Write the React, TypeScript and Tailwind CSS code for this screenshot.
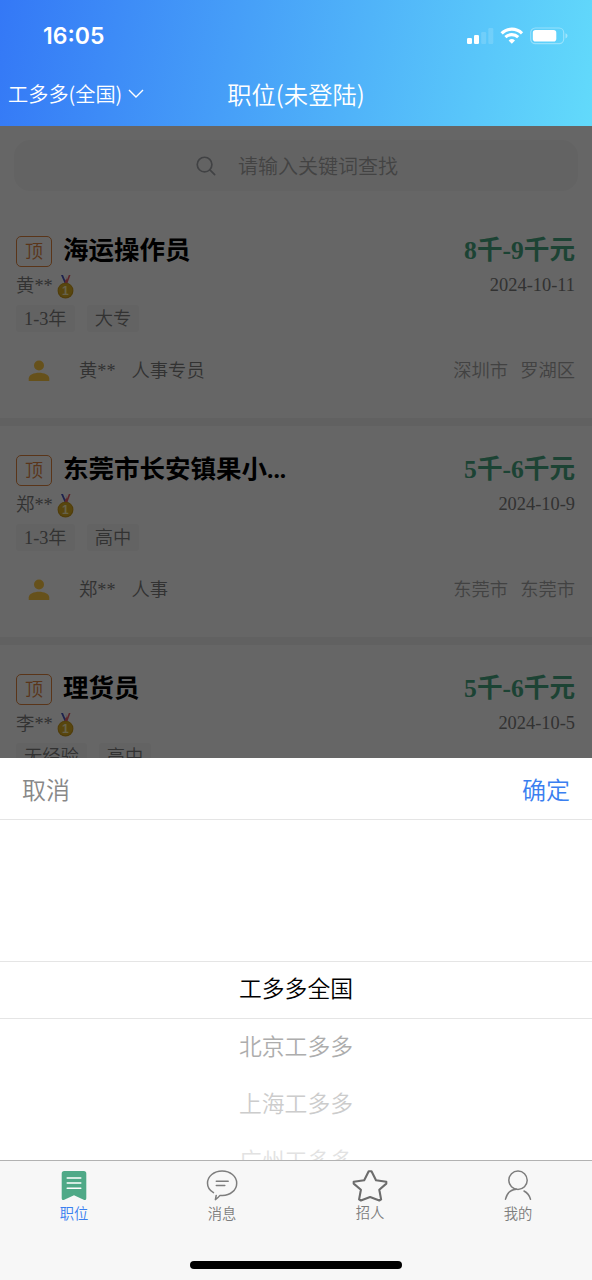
import { useState } from 'react'
import { cva } from 'class-variance-authority'

interface Job {
  id: number
  title: string
  salary: string
  owner: string
  date: string
  tags: string[]
  role: string
  city: string
  district: string
}

const JOBS: Job[] = [
  { id: 1, title: '海运操作员', salary: '8千-9千元', owner: '黄**', date: '2024-10-11', tags: ['1-3年', '大专'], role: '人事专员', city: '深圳市', district: '罗湖区' },
  { id: 2, title: '东莞市长安镇果小...', salary: '5千-6千元', owner: '郑**', date: '2024-10-9', tags: ['1-3年', '高中'], role: '人事', city: '东莞市', district: '东莞市' },
  { id: 3, title: '理货员', salary: '5千-6千元', owner: '李**', date: '2024-10-5', tags: ['无经验', '高中'], role: '', city: '', district: '' },
]

const REGIONS = ['工多多全国', '北京工多多', '上海工多多', '广州工多多']
const REGION_COLORS = ['text-black', 'text-[#adadad]', 'text-[#cccccc]', 'text-[#e2e2e2]']

const TABS = [
  { label: '职位', icon: BookmarkIcon },
  { label: '消息', icon: ChatIcon },
  { label: '招人', icon: StarIcon },
  { label: '我的', icon: UserIcon },
]

const tabLabel = cva('text-[14.3px] leading-[18px]', {
  variants: {
    active: { true: 'text-[#3a7ff0]', false: 'text-[#7d7d7d]' },
  },
})

function StatusIcons() {
  return (
    <svg width="102" height="18" viewBox="0 0 102 18" fill="white">
      <rect x="0" y="11" width="5" height="6" rx="1.3" />
      <rect x="7" y="8" width="5" height="9" rx="1.3" />
      <rect x="14.2" y="5" width="5" height="12" rx="1.3" opacity="0.15" />
      <rect x="21.3" y="1" width="5" height="16" rx="1.3" opacity="0.15" />
      <g fill="none" stroke="white" strokeWidth="3.1">
        <path d="M34.6 6.3a14.6 14.6 0 0 1 20.4 0" />
        <path d="M38.4 10.2a9.2 9.2 0 0 1 12.8 0" />
      </g>
      <path d="M41.6 13.5a4.8 4.8 0 0 1 6.4 0l-3.2 3.3z" />
      <rect x="63.7" y="1" width="33" height="15.6" rx="4.6" fill="none" stroke="white" strokeOpacity="0.35" strokeWidth="1.2" />
      <rect x="65.8" y="3" width="23.5" height="11.6" rx="2.8" />
      <path d="M98.5 6.2c1.4.5 2 1.4 2 2.6s-.6 2.1-2 2.6z" opacity="0.4" />
    </svg>
  )
}

function MedalIcon() {
  return (
    <svg width="18" height="24" viewBox="0 0 18 24">
      <path d="M4 0h3.500l3 8h-3z" fill="#4a55c0" />
      <path d="M6 0h2l1.300 4-.8 2z" fill="#fff" />
      <path d="M13.500 0h-3l-3 8h3z" fill="#e8606c" />
      <path d="M11.800 0h-1.600l-1 3 .7 2z" fill="#fff" />
      <circle cx="8.500" cy="15.700" r="7.900" fill="#c99a1c" />
      <circle cx="8.500" cy="15.300" r="6.900" fill="#dcae24" />
      <text x="8.300" y="19.700" textAnchor="middle" fontSize="12" fontWeight="700" fill="#fff3b8" fontFamily="Liberation Sans, sans-serif">1</text>
    </svg>
  )
}

function PersonIcon() {
  return (
    <svg width="22" height="22" viewBox="0 0 22 22" fill="#ffca45">
      <circle cx="11" cy="5.500" r="5" />
      <path d="M.700 21v-2.600C.700 14.800 6 12.700 11 12.700s10.300 2.100 10.300 5.700V21z" />
    </svg>
  )
}

function BookmarkIcon() {
  return (
    <svg width="36" height="32" viewBox="0 0 36 32">
      <path d="M8.200 1h19.600A2.500 2.500 0 0 1 30.300 3.500v24.500c0 1.900-1.200 2.500-2.600 1.700L18 25.200l-9.700 4.500C6.900 30.500 5.700 29.900 5.700 28V3.500A2.500 2.500 0 0 1 8.200 1z" fill="#4fa987" />
      <path d="M11.200 8h13.600M11.200 13.100h13.600M11.200 18.200h13.600" stroke="#fff" strokeWidth="1.500" strokeLinecap="round" />
    </svg>
  )
}

function ChatIcon() {
  return (
    <svg width="36" height="32" viewBox="0 0 36 32" fill="none" stroke="#7d7d7d" strokeWidth="1.500" strokeLinecap="round" strokeLinejoin="round">
      <path d="M9.500 22.600C5.800 20.500 3.500 17 3.500 13.200 3.500 6.300 10 1 18.100 1s14.600 5.300 14.600 12.200-6.500 12.300-14.300 12.300c-.8 0-1.600 0-2.400-.1-1.500 1.900-3 3.300-4.600 4.300l.8-4.300" />
      <path d="M12.300 11.300h11.900M12.300 15.400h8.500" />
    </svg>
  )
}

function StarIcon() {
  return (
    <svg width="36" height="32" viewBox="0 0 36 32" fill="none" stroke="#6c6c6c" strokeWidth="2.100" strokeLinejoin="round">
      <path d="M16.700 1.300h2.800l4.500 9 10.300 1.500v1.800l-7 6.200 1.800 9.600-1.800 1.100-9.200-3.500-9.200 3.500-1.800-1.100 1.800-9.600-7.200-6.200v-1.800l10.500-1.500z" />
    </svg>
  )
}

function UserIcon() {
  return (
    <svg width="36" height="32" viewBox="0 0 36 32" fill="none" stroke="#7d7d7d" strokeWidth="1.500" strokeLinecap="round">
      <circle cx="18" cy="10.200" r="9.200" />
      <path d="M5.500 29.200c1.200-5.300 4.800-9.500 11-9.900M24 21c3.500 1.900 5.500 4.500 6.500 8.200" />
    </svg>
  )
}

function JobCard({ job }: { job: Job }) {
  return (
    <div className="h-[219px] shrink-0 border-b-8 border-[#f3f3f3] bg-white px-4 pt-[27px]">
      <div className="flex h-8 items-center">
        <span className="mt-0.5 flex h-[31px] w-9 items-center justify-center rounded-[5px] border border-[#e0853f] pt-[3px] text-[18px] text-[#e0853f]">
          顶
        </span>
        <h3 className="ml-[11px] flex-1 pt-px text-[25.500px] leading-8 font-bold text-black">{job.title}</h3>
        <span className="mr-px pt-px text-[25.600px] leading-8 font-bold text-[#48a882]">{job.salary}</span>
      </div>
      <div className="mt-[7px] flex h-7 items-center justify-between text-[18.400px] text-[#7d7d7d]">
        <div className="flex items-center gap-1">
          <span>{job.owner}</span>
          <MedalIcon />
        </div>
        <span className="mr-px mb-0.5">{job.date}</span>
      </div>
      <div className="mt-1 flex gap-3">
        {job.tags.map((tag) => (
          <span key={tag} className="h-[27px] rounded-[3px] bg-[#f7f7f7] px-2 pt-px text-[18.300px] leading-[27px] text-[#7d7d7d]">
            {tag}
          </span>
        ))}
      </div>
      {job.role && (
        <div className="mt-[25px] flex h-7 items-center pl-3 text-[18.300px]">
          <PersonIcon />
          <span className="ml-[29px] pt-0.5 text-[#7d7d7d]">{job.owner}</span>
          <span className="ml-4 flex-1 pt-0.5 text-[#7d7d7d]">{job.role}</span>
          <div className="mr-px flex gap-3 pt-0.5 text-[#a5a5a5]">
            <span>{job.city}</span>
            <span>{job.district}</span>
          </div>
        </div>
      )}
    </div>
  )
}

export default function App() {
  const [activeTab, setActiveTab] = useState('职位')
  const [region, setRegion] = useState(REGIONS[0])

  return (
    <div className="flex h-[1280px] w-[592px] flex-col overflow-hidden bg-white font-['Noto_Sans_CJK_SC',sans-serif] font-[350]">
      <header className="h-[126px] shrink-0 bg-linear-[100deg,#3478f6_0%,#62dafb_100%] text-white">
        <div className="flex h-[62px] items-end justify-between pr-[23px] pb-3 pl-[43px]">
          <span className="font-['Inter',sans-serif] text-[23px] leading-7 font-semibold">16:05</span>
          <div className="pb-[5px]">
            <StatusIcons />
          </div>
        </div>
        <div className="grid h-16 grid-cols-3 items-center">
          <button className="flex items-center gap-1.5 pl-2 text-[20.200px] whitespace-nowrap">
            工多多(全国)
            <svg width="16" height="10" viewBox="0 0 16 10" fill="none" stroke="white" strokeWidth="1.400">
              <path d="M1 1l7 7 7-7" />
            </svg>
          </button>
          <h1 className="text-center text-[24.300px] whitespace-nowrap">职位(未登陆)</h1>
        </div>
      </header>

      <main className="relative flex h-[632px] shrink-0 flex-col overflow-hidden font-['Liberation_Serif','Noto_Sans_CJK_SC',serif]">
        <div className="h-[81px] shrink-0 bg-white px-3.5 pt-3.5">
          <div className="flex h-[51px] items-center justify-center gap-[22px] rounded-2xl bg-[#f8f8f8] pl-0.5 text-[20px] text-[#a8a8a8]">
            <svg width="20" height="20" viewBox="0 0 21 21" fill="none" stroke="#a2a5aa" strokeWidth="1.800" strokeLinecap="round">
              <circle cx="9" cy="9" r="7.700" />
              <path d="M14.600 14.600l5 5" />
            </svg>
            <span className="pt-[3px]">请输入关键词查找</span>
          </div>
        </div>
        {JOBS.map((job) => (
          <JobCard key={job.id} job={job} />
        ))}
        <div className="absolute inset-0 bg-black/60" />
      </main>

      <section className="flex h-[402px] shrink-0 flex-col overflow-hidden bg-white">
        <div className="flex h-[62px] shrink-0 items-center justify-between border-b border-[#e5e5e5] px-[22px] text-[24px]">
          <button className="text-[#888888]">取消</button>
          <button className="text-[#3a7ff0]">确定</button>
        </div>
        <div className="h-[141px] shrink-0" />
        {REGIONS.map((name, i) => (
          <button
            key={name}
            onClick={() => setRegion(name)}
            className={`shrink-0 pb-1 text-center text-[22.800px] leading-[52px] ${REGION_COLORS[i]} ${name === region ? 'h-[58px] border-y border-[#e5e5e5]' : 'h-[57px]'}`}
          >
            {name}
          </button>
        ))}
      </section>

      <nav className="flex flex-1 flex-col items-center justify-between border-t border-[#b2b2b2] bg-[#f7f7f7] pt-[9px] pb-[11px]">
        <div className="grid w-full grid-cols-4">
          {TABS.map(({ label, icon: Icon }) => (
            <button key={label} onClick={() => setActiveTab(label)} className={`flex flex-col items-center ${label === '招人' ? 'gap-px' : 'gap-0.5'}`}>
              <Icon />
              <span className={tabLabel({ active: label === activeTab })}>{label}</span>
            </button>
          ))}
        </div>
        <div className="h-2 w-[212px] rounded-full bg-black" />
      </nav>
    </div>
  )
}
